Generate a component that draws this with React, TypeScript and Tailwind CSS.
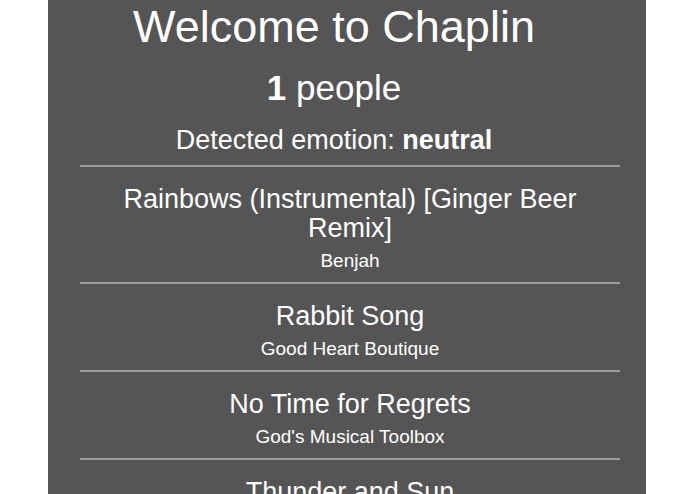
import React from 'react';

interface Song {
  title: string;
  artist: string;
}

const songs: Song[] = [
  { title: 'Rainbows (Instrumental) [Ginger Beer Remix]', artist: 'Benjah' },
  { title: 'Rabbit Song', artist: 'Good Heart Boutique' },
  { title: 'No Time for Regrets', artist: "God's Musical Toolbox" },
  { title: 'Thunder and Sun', artist: 'Lee Rosevere' },
];

const SongRow: React.FC<{ song: Song }> = ({ song }) => (
  <li className="border-t-2 border-[#9c9c9c] pt-[18px] pb-[10px] text-center">
    <div className="text-[27px] leading-[29px]">{song.title}</div>
    <div className="mt-[7px] text-[19px] leading-[22px]">{song.artist}</div>
  </li>
);

const App: React.FC = () => {
  return (
    <div className="min-h-screen bg-white font-['Liberation_Sans',Arial,sans-serif] text-white">
      <div className="ml-[48px] w-[598px] min-h-screen bg-[#555555] pb-8">
        <header className="pr-[26px] pt-[2px] text-center">
          <h1 className="text-[45px] leading-[50px] font-normal">Welcome to Chaplin</h1>
          <p className="mt-[16px] text-[35px] leading-[40px]">
            <span className="font-bold">1</span> people
          </p>
          <p className="mt-[17px] text-[27px] leading-[30px]">
            Detected emotion: <span className="font-bold">neutral</span>
          </p>
        </header>
        <ul className="mt-[10px] ml-[32px] mr-[26px]">
          {songs.map((s) => (
            <SongRow key={s.title} song={s} />
          ))}
        </ul>
      </div>
    </div>
  );
};

export default App;
